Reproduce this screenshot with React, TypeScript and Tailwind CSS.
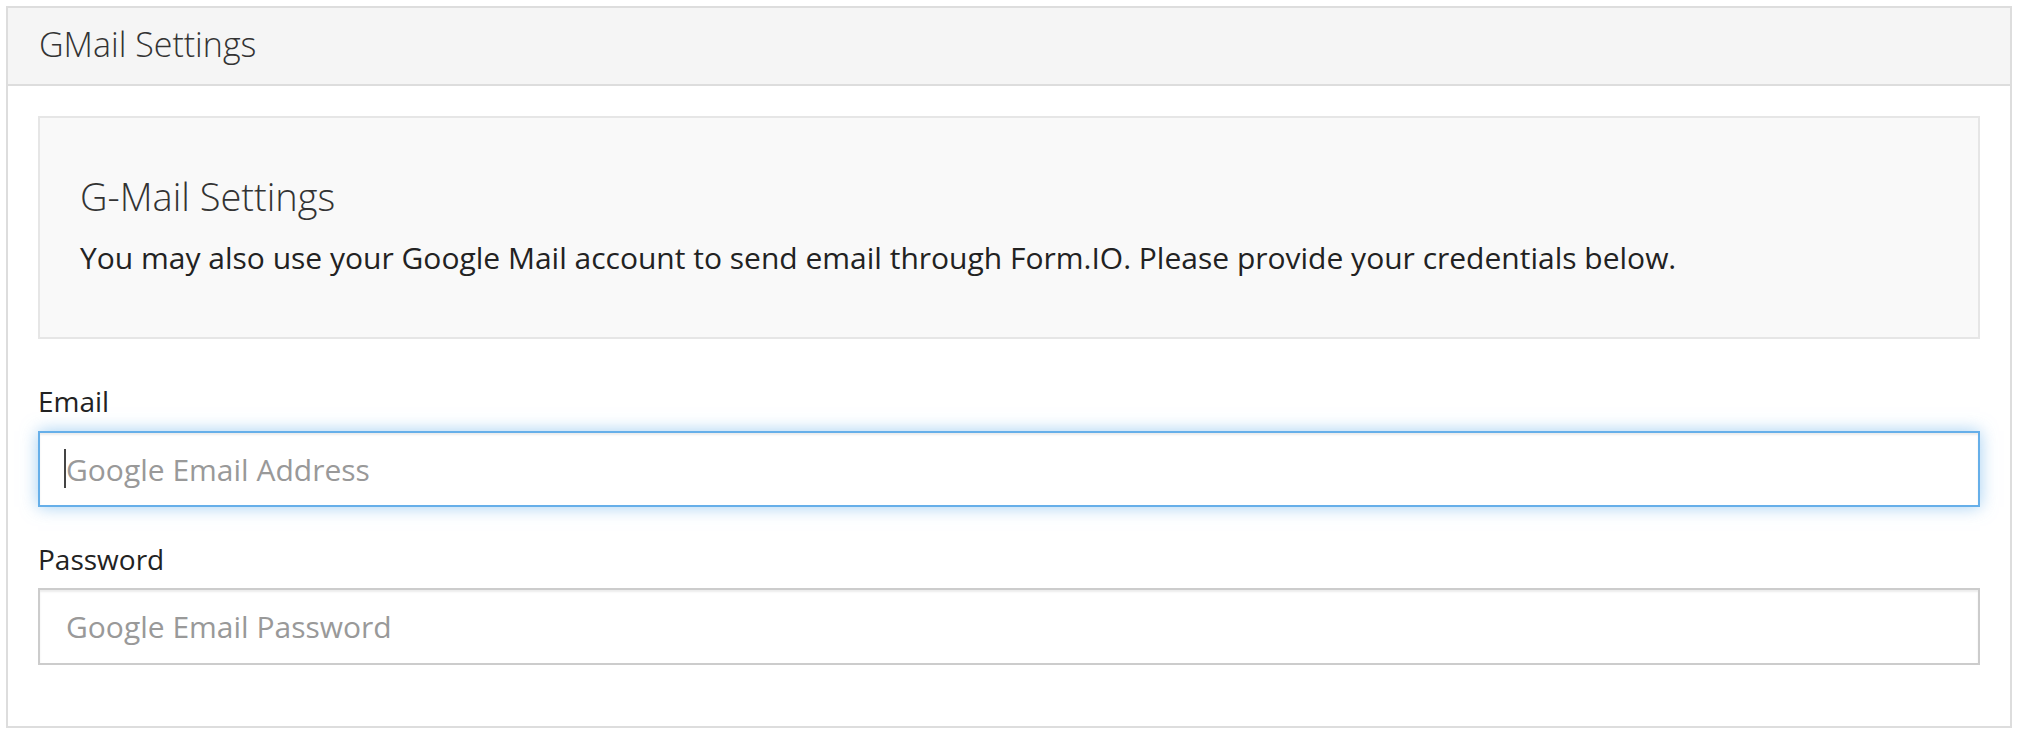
export default function App() {
  return (
    <div className="min-h-screen bg-white pb-[6px] pl-[6px] pr-[8px] pt-[6px] font-['Open_Sans',sans-serif] text-[#333]">
      <div className="border-2 border-[#ddd]">
        {/* HEADER */}
        <div className="h-[78px] border-b-2 border-[#ddd] bg-[#f5f5f5] pl-[31px] pt-[16px]">
          <h2 className="text-[34px] font-light leading-[40px] text-[#333]">GMail Settings</h2>
        </div>

        {/* BODY */}
        <div className="px-[30px] pb-[61px] pt-[30px]">
          <div className="border-2 border-[#e6e6e6] bg-[#f9f9f9] px-[40px] pb-[59px] pt-[58px]">
            <h3 className="text-[38px] font-light leading-[40px] text-[#333]">G-Mail Settings</h3>
            <p className="mt-[22px] text-[30px] leading-[40px] text-[#222]">
              You may also use your Google Mail account to send email through Form.IO. Please provide your credentials below.
            </p>
          </div>

          <div className="mt-[42px]">
            <label className="block text-[28px] leading-[40px] text-[#222]">Email</label>
            <div className="relative mt-[10px]">
              <input
                type="email"
                placeholder="Google Email Address"
                className="block h-[76px] w-full border-2 border-[#66afe9] bg-white px-[26px] text-[30px] leading-[40px] text-[#555] shadow-[inset_0_2px_2px_rgba(0,0,0,0.075),0_0_16px_rgba(102,175,233,0.6)] outline-none placeholder:text-[#999]"
              />
              <span className="absolute left-[26px] top-[18px] h-[39px] w-[2px] bg-[#444]" />
            </div>
          </div>

          <div className="mt-[32px]">
            <label className="block text-[28px] leading-[40px] text-[#222]">Password</label>
            <input
              type="password"
              placeholder="Google Email Password"
              className="mt-[9px] block h-[77px] w-full border-2 border-[#ccc] bg-white px-[26px] text-[30px] leading-[40px] text-[#555] shadow-[inset_0_2px_2px_rgba(0,0,0,0.075)] outline-none placeholder:text-[#999]"
            />
          </div>
        </div>
      </div>
    </div>
  );
}
